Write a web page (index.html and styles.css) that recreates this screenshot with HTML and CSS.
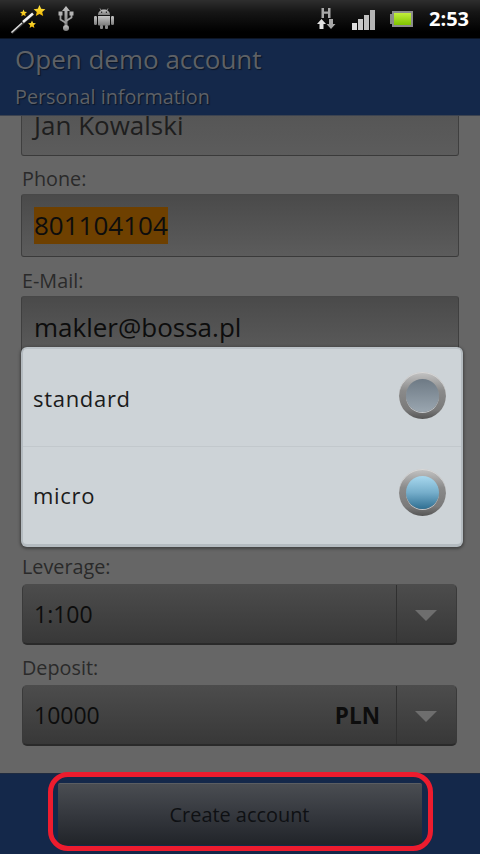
FILE: index.html
```html
<!DOCTYPE html>
<html lang="en">
<head>
<meta charset="utf-8">
<title>Open demo account</title>
<link rel="stylesheet" href="styles.css">
</head>
<body>
<div class="screen">
  <div class="statusbar">
    <div class="status-left">
      <svg class="ic-wand" width="46" height="36" viewBox="0 0 46 36">
        <defs><linearGradient id="st" x1="0" y1="0" x2="0" y2="1"><stop offset="0" stop-color="#ffe94a"/><stop offset="1" stop-color="#f0b400"/></linearGradient></defs>
        <path d="M11.500 33 L33 14" stroke="#3a3a3a" stroke-width="2.800" fill="none"/>
        <path d="M11.500 32.500 L22 23" stroke="#e0e0e0" stroke-width="1.300" fill="none"/>
        <path d="M23 22 L33 13.500" stroke="#f2f2f2" stroke-width="2.600" fill="none"/>
        <path d="M39.500 5 l1.700 3.800 4.200.4-3.200 2.800 1 4.100-3.700-2.200-3.700 2.200 1-4.100-3.200-2.800 4.200-.4z" fill="url(#st)"/>
        <path d="M23.500 8.500 l1 2.300 2.500.2-1.900 1.700.6 2.500-2.200-1.300-2.200 1.300.6-2.500-1.900-1.700 2.500-.2z" fill="url(#st)" transform="translate(0 1)"/>
        <path d="M32 19.500 l1.100 2.500 2.800.3-2.100 1.900.6 2.800-2.400-1.400-2.400 1.400.6-2.800-2.100-1.900 2.800-.3z" fill="url(#st)" transform="translate(0 1)"/>
      </svg>
      <svg class="ic-usb" width="16" height="26" viewBox="0 0 16 26">
        <defs><linearGradient id="gr" x1="0" y1="0" x2="0" y2="1"><stop offset="0" stop-color="#c4c4c4"/><stop offset="1" stop-color="#7c7c7c"/></linearGradient></defs>
        <path d="M8 0 L12 5 H9.500 V19 H6.500 V5 H4z" fill="url(#gr)"/>
        <circle cx="8" cy="22" r="3" fill="url(#gr)"/>
        <path d="M8 17 L2.500 13.500 V9" fill="none" stroke="#9c9c9c" stroke-width="1.800"/>
        <path d="M8 15 L13.500 11.500 V9" fill="none" stroke="#a4a4a4" stroke-width="1.800"/>
        <rect x="0.500" y="5.500" width="4" height="4" fill="#b4b4b4"/>
        <rect x="11.500" y="5.500" width="4" height="4" fill="#b4b4b4"/>
      </svg>
      <svg class="ic-android" width="20" height="21" viewBox="0 0 20 21">
        <path d="M4 7 C4 3.500 7 1.600 10 1.600 S16 3.500 16 7z" fill="url(#gr)"/>
        <path d="M6 0.500 L7.500 2.800 M14 0.500 L12.500 2.800" stroke="#b0b0b0" stroke-width="0.800"/>
        <rect x="7" y="3.600" width="1.200" height="1.200" fill="#111"/>
        <rect x="11.800" y="3.600" width="1.200" height="1.200" fill="#111"/>
        <path d="M4 8 H16 V16.500 Q16 17.500 15 17.500 H5 Q4 17.500 4 16.500z" fill="url(#gr)"/>
        <rect x="0" y="8" width="3" height="9" rx="1.200" fill="url(#gr)"/>
        <rect x="17" y="8" width="3" height="9" rx="1.200" fill="url(#gr)"/>
        <rect x="6" y="17" width="3" height="4" rx="1" fill="#8a8a8a"/>
        <rect x="11" y="17" width="3" height="4" rx="1" fill="#8a8a8a"/>
      </svg>
    </div>
    <div class="status-right">
      <svg class="ic-data" width="19" height="21" viewBox="0 0 19 21">
        <path d="M4.500 0 H7 V3.600 H11 V0 H13.500 V10 H11 V5.800 H7 V10 H4.500z" fill="#a8a8a8"/>
        <path d="M4.500 11 L9 16 H6.500 V21 H2.500 V16 H0z" fill="#e2e2e2"/>
        <path d="M12 11 H16 V16 H18.500 L14 21 L9.500 16 H12z" fill="#a8a8a8"/>
      </svg>
      <svg class="ic-signal" width="23" height="20" viewBox="0 0 23 20">
        <rect x="0" y="13" width="5" height="7" fill="#dcdcdc"/>
        <rect x="6" y="9" width="5" height="11" fill="#c8c8c8"/>
        <rect x="12" y="5" width="5" height="15" fill="#c0c0c0"/>
        <rect x="18" y="0" width="5" height="20" fill="#b4b4b4"/>
      </svg>
      <div class="battery"><span class="battery-cap"></span><span class="battery-body"><span class="battery-fill"></span></span></div>
      <span class="clock">2:53</span>
    </div>
  </div>

  <header class="titlebar">
    <h1 class="title">Open demo account</h1>
    <h2 class="subtitle">Personal information</h2>
  </header>

  <main class="form">
    <div class="input input-cut"><span class="input-text">Jan Kowalski</span></div>
    <label class="label label-phone">Phone:</label>
    <div class="input"><span class="input-text selected">801104104</span></div>
    <label class="label label-email">E-Mail:</label>
    <div class="input"><span class="input-text">makler@bossa.pl</span></div>
    <div class="covered"></div>
    <label class="label label-lev">Leverage:</label>
    <div class="select">
      <span class="select-value">1:100</span>
      <span class="select-btn"><span class="arrow"></span></span>
    </div>
    <label class="label label-dep">Deposit:</label>
    <div class="select">
      <span class="select-value">10000</span>
      <span class="select-unit">PLN</span>
      <span class="select-btn"><span class="arrow"></span></span>
    </div>
  </main>

  <footer class="footer">
    <button class="create" type="button">Create account</button>
  </footer>

  <div class="dialog">
    <div class="option">
      <span>standard</span>
      <span class="radio"><span class="radio-in"></span></span>
    </div>
    <div class="option option-last">
      <span>micro</span>
      <span class="radio"><span class="radio-in radio-on"></span></span>
    </div>
  </div>

  <div class="ring"></div>
</div>
</body>
</html>
```

FILE: styles.css
```css
* { box-sizing: border-box; }
html, body { margin: 0; padding: 0; }
body { background: #666; font-family: "Open Sans", "Noto Sans", sans-serif; }
.screen { position: relative; width: 480px; height: 854px; overflow: hidden; display: flex; flex-direction: column; background: #666666; }

.statusbar { height: 38px; flex: none; display: flex; justify-content: space-between; align-items: center; background: linear-gradient(#2e2e2e 0, #161616 12px, #000 32px, #000 100%); }
.status-left { display: flex; align-items: center; }
.ic-wand { margin-top: -2px; }
.ic-usb { margin-left: 12px; margin-top: -1px; }
.ic-android { margin-left: 20px; margin-top: -1px; }
.status-right { display: flex; align-items: center; padding-right: 10px; }
.ic-data { margin-top: -1px; }
.ic-signal { margin-left: 16px; margin-top: 2px; }
.battery { display: flex; align-items: center; margin-left: 15px; margin-top: 0; }
.battery-cap { width: 2px; height: 10px; background: #8a8a8a; }
.battery-body { width: 21px; height: 16px; border: 2px solid #8c8c8c; background: #333; display: block; }
.battery-fill { display: block; height: 100%; background: linear-gradient(#c2ee3c, #7fc400); }
.clock { margin-left: 16px; font: 700 20px/24px "Open Sans", sans-serif; color: #fff; width: 41px; }

.titlebar { height: 78px; flex: none; background: #14284a; border-top: 1px solid #0c1526; border-bottom: 1px solid #3c4350; padding: 4px 15px 0; color: #5e6166; text-shadow: 1px 1px 1px #0b1526; }
.title { margin: 0; font-weight: 400; font-size: 26px; line-height: 32px; }
.subtitle { margin: 8px 0 0; font-weight: 400; font-size: 19.8px; line-height: 27px; }

.form { flex: 1; min-height: 0; display: flex; flex-direction: column; padding: 0 21px 0 22px; background: #666666; overflow: hidden; }
.label { display: block; height: 24px; font-size: 19.8px; line-height: 24px; color: #2a2a2a; flex: none; }
.label-phone { margin-top: 11px; }
.label-email { margin-top: 12px; }
.label-lev { margin-bottom: 5px; }
.label-dep { margin-top: 11px; margin-bottom: 5px; }
.covered { height: 196px; flex: none; }

.input { flex: none; height: 63px; margin-left: -1px; margin-top: 3px; border: 1px solid #3f3f3f; border-top-color: #484848; border-bottom-color: #3a3a3a; border-radius: 3px; background: linear-gradient(#4a4a4a, #5c5c5c); display: flex; align-items: center; padding-left: 12px; font-size: 26px; color: #0d0d0d; }
.input-text { line-height: 37px; }
.input-cut { height: 40px; margin-top: 0; border-top: 0; border-radius: 0 0 3px 3px; overflow: hidden; align-items: flex-start; background: linear-gradient(#565656, #5c5c5c); }
.input-cut .input-text { color: #1e1e1e; margin-top: -9px; }
.selected { background: #6e4000; }

.select { flex: none; height: 61px; margin-right: 2px; display: flex; align-items: center; border: 1px solid #3a3a3a; border-top-color: #4c4c4c; border-bottom: 2px solid #2a2a2a; border-radius: 5px; background: linear-gradient(#4c4c4c, #383838); color: #0d0d0d; font-size: 23px; }
.select-value { flex: 1; padding-left: 11px; }
.select-unit { font-weight: 700; font-size: 22.5px; padding-right: 16px; }
.select-btn { width: 60px; align-self: stretch; border-left: 1px solid #303030; display: flex; align-items: center; justify-content: center; }
.arrow { width: 0; height: 0; border-left: 11px solid transparent; border-right: 11px solid transparent; border-top: 11px solid #6e6e6e; margin-left: -2px; margin-top: 2px; }

.footer { height: 81px; flex: none; background: #14284a; border-top: 1px solid #1f2b40; display: flex; align-items: flex-start; justify-content: center; padding: 9px 0 0; }
.create { width: 364px; height: 62px; margin-left: -1px; border: 0; border-top: 1px solid #5a5d62; border-radius: 2px; background: linear-gradient(#4a4d52, #35383e 50%, #212429); color: #0e1013; font-family: inherit; font-size: 19.900px; padding: 0; }

.dialog { position: absolute; left: 21px; top: 347px; width: 442px; height: 200px; background: #cdd3d7; border: 2px solid #b4bbc0; border-top-color: #bcc3c8; border-bottom-width: 3px; border-radius: 6px; box-shadow: 0 1px 3px 1px rgba(0,0,0,.35); color: #1b1b1b; font-size: 22px; letter-spacing: .7px; }
.option { height: 98px; display: flex; align-items: center; justify-content: space-between; padding: 0 15px 0 10px; border-bottom: 1px solid #c2c8cc; }
.option-last { height: 96px; border-bottom: 0; }
.radio { width: 47px; height: 47px; margin-bottom: 5px; border-radius: 50%; display: flex; align-items: center; justify-content: center; background: linear-gradient(#c4c4c4, #8a8a8a 40%, #7a7a7a 80%, #555); box-shadow: inset 0 1px 0 #d8d8d8; }
.radio-in { width: 33px; height: 33px; border-radius: 50%; background: linear-gradient(#6e7a85, #9aa6b0); box-shadow: 0 1px 0 #c4c8cc; }
.radio-on { background: linear-gradient(#a8d8ee, #76aecb 50%, #2f6f92); }

.ring { position: absolute; left: 48px; top: 772px; width: 385px; height: 79px; border: 5px solid #ed1c2e; border-radius: 20px; }
```
